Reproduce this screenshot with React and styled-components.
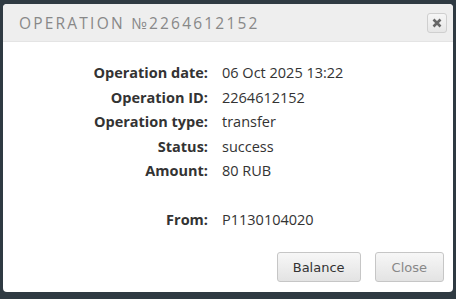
import React from "react";
import styled, { createGlobalStyle } from "styled-components";

const Global = createGlobalStyle`
  html, body {
    margin: 0;
    padding: 0;
    background: #2f3a42;
  }
  body {
    width: 456px;
    height: 299px;
    overflow: hidden;
  }
`;

const Page = styled.div`
  width: 456px;
  height: 299px;
  padding: 4px 3px 7px 3px;
  box-sizing: border-box;
  display: flex;
`;

const Dialog = styled.div`
  flex: 1;
  display: flex;
  flex-direction: column;
  background: #ffffff;
  border-radius: 4px;
  overflow: hidden;
`;

const Header = styled.div`
  flex-shrink: 0;
  height: 37px;
  background: #eeeeee;
  border-bottom: 1px solid #e4e4e4;
  display: flex;
  align-items: center;
  justify-content: space-between;
  padding: 0 6px 0 16px;
`;

const Title = styled.div`
  font-family: "Open Sans", sans-serif;
  font-size: 15.5px;
  letter-spacing: 2.2px;
  color: #888888;
  padding-top: 1px;
`;

const CloseX = styled.button`
  width: 20px;
  height: 20px;
  padding: 0;
  border: 1px solid #cfcfcf;
  border-radius: 3px;
  background: linear-gradient(#f6f6f6, #e6e6e6);
  display: flex;
  align-items: center;
  justify-content: center;
  margin-top: 1px;
`;

const Body = styled.div`
  flex: 1;
  display: grid;
  grid-template-columns: 205px 1fr;
  column-gap: 14px;
  row-gap: 6px;
  align-content: start;
  padding-top: 22px;
  font-family: "Open Sans", sans-serif;
  font-size: 14.5px;
  color: #333333;
`;

const Label = styled.div`
  text-align: right;
  font-weight: 700;
  line-height: 18.6px;
  color: #333333;
`;

const Value = styled.div`
  line-height: 18.6px;
  color: #333333;
`;

const Spacer = styled.div`
  grid-column: 1 / 3;
  height: 18px;
`;

const Footer = styled.div`
  display: flex;
  justify-content: flex-end;
  gap: 14px;
  padding: 0 9px 10px 0;
`;

const Button = styled.button`
  height: 30px;
  padding: 0 ${(p) => p.$pad}px;
  border: 1px solid #c6c6c6;
  border-radius: 3px;
  background: linear-gradient(#f7f7f7, #e3e3e3);
  font-family: "DejaVu Sans", Verdana, sans-serif;
  font-size: 13px;
  color: ${(p) => (p.$muted ? "#888888" : "#333333")};
`;

const rows = [
  ["Operation date:", "06 Oct 2025 13:22"],
  ["Operation ID:", "2264612152"],
  ["Operation type:", "transfer"],
  ["Status:", "success"],
  ["Amount:", "80 RUB"],
];

export default function App() {
  return (
    <Page>
      <Global />
      <Dialog>
        <Header>
          <Title>OPERATION №2264612152</Title>
          <CloseX>
            <svg width="10" height="10" viewBox="0 0 10 10">
              <path d="M1.5 1.5 L8.5 8.5 M8.5 1.5 L1.5 8.5" stroke="#666" strokeWidth="2.6" />
            </svg>
          </CloseX>
        </Header>
        <Body>
          {rows.map(([l, v]) => (
            <React.Fragment key={l}>
              <Label>{l}</Label>
              <Value>{v}</Value>
            </React.Fragment>
          ))}
          <Spacer />
          <Label>From:</Label>
          <Value>P1130104020</Value>
        </Body>
        <Footer>
          <Button $pad={15}>Balance</Button>
          <Button $pad={16} $muted>Close</Button>
        </Footer>
      </Dialog>
    </Page>
  );
}
